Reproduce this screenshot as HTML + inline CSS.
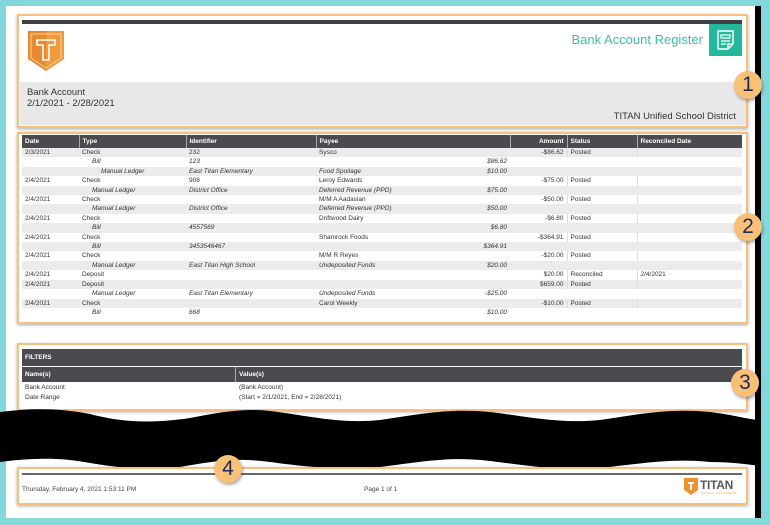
<!DOCTYPE html>
<html><head><meta charset="utf-8"><style>
*{margin:0;padding:0;box-sizing:border-box}
body{width:770px;height:525px;background:#84d8dc;position:relative;overflow:hidden;font-family:"Liberation Sans",Arial,sans-serif;color:#333}
.page{position:absolute;left:6px;top:6px;width:752px;height:512px;background:#fff}
.rb{position:absolute;left:755px;top:6px;width:6px;height:512px;background:#000}
.box{position:absolute;border:2px solid #f8c07a;box-shadow:0 1px 3px rgba(0,0,0,.35)}
.badge{position:absolute;width:28px;height:28px;border-radius:50%;background:#f9c176;color:#1f2a56;font-size:21px;text-align:center;line-height:28px;box-shadow:1px 2px 3px rgba(0,0,0,.35)}
table{border-collapse:collapse;position:absolute;font-size:6.5px}
th{background:#4a4b4f;color:#fff;text-align:left;font-weight:bold;padding:0 3px;height:13px;border-left:1px solid #aaa}
td{height:9.4px;padding:0 3px;white-space:nowrap;line-height:9.4px}
tr:nth-child(even) td{background:#ebebec}
.i{font-style:italic}
.r{text-align:right}
.sb{border-left:1px solid #ddd}
</style></head><body>
<div class="page"></div>
<div class="rb"></div>

<!-- box1 -->
<div class="box" style="left:17px;top:14px;width:731px;height:114px"></div>
<div style="position:absolute;left:22px;top:20px;width:720px;height:4px;background:#3e4044"></div>
<svg style="position:absolute;left:28px;top:31px" width="36" height="40" viewBox="0 0 36 40">
<path d="M0 0H36V28L18 40L0 28Z" fill="#e8892e"/><path d="M18 0H36V28L18 40Z" fill="#f19a3c"/>
<path d="M3 3H33V27L18 37L3 27Z" fill="none" stroke="#fbd0a0" stroke-width="1"/>
<path d="M9 9H27V14H21V29H15V14H9Z" fill="none" stroke="#fff" stroke-width="1.6"/></svg>
<div style="position:absolute;right:67px;top:32px;font-size:13px;color:#3dbfa6;white-space:nowrap">Bank Account Register</div>
<div style="position:absolute;left:709px;top:24px;width:33px;height:32px;background:#24b89e"></div>
<svg style="position:absolute;left:716px;top:30px" width="19" height="20" viewBox="0 0 19 20"><path d="M2 1H17V14L12 19H2Z M12 19V14H17" fill="none" stroke="#fff" stroke-width="1.4"/><path d="M5 5H14V8H5Z M5 11H14 M5 14H10" fill="none" stroke="#fff" stroke-width="1.2"/></svg>
<div style="position:absolute;left:20px;top:82px;width:726px;height:43px;background:#e8e8e9"></div>
<div style="position:absolute;left:27px;top:87px;font-size:9.5px;line-height:11px;color:#333">Bank Account<br>2/1/2021 - 2/28/2021</div>
<div style="position:absolute;right:34px;top:111px;font-size:9.5px;color:#333">TITAN Unified School District</div>
<div class="badge" style="left:734px;top:71px">1</div>

<!-- box2 -->
<div class="box" style="left:17px;top:132px;width:731px;height:192px"></div>
<table style="left:22px;top:135px;width:720px">
<tr><th style="width:57px;border-left:0">Date</th><th style="width:107px">Type</th><th style="width:130px">Identifier</th><th style="width:194px">Payee</th><th style="width:57px;text-align:right">Amount</th><th style="width:70px">Status</th><th>Reconciled Date</th></tr>
<tr><td>2/3/2021</td><td>Check</td><td>232</td><td>Sysco</td><td class="r">-$86.62</td><td class="sb">Posted</td><td class="sb"></td></tr>
<tr><td></td><td class="i" style="padding-left:13px">Bill</td><td class="i">123</td><td class="i r">$86.62</td><td></td><td></td><td></td></tr>
<tr><td></td><td class="i" style="padding-left:22px">Manual Ledger</td><td class="i">East Titan Elementary</td><td class="i" style="position:relative">Food Spoilage<span style="position:absolute;right:3px">$10.00</span></td><td></td><td></td><td></td></tr>
<tr><td>2/4/2021</td><td>Check</td><td>908</td><td>Leroy Edwards</td><td class="r">-$75.00</td><td class="sb">Posted</td><td class="sb"></td></tr>
<tr><td></td><td class="i" style="padding-left:13px">Manual Ledger</td><td class="i">District Office</td><td class="i" style="position:relative">Deferred Revenue (PPD)<span style="position:absolute;right:3px">$75.00</span></td><td></td><td></td><td></td></tr>
<tr><td>2/4/2021</td><td>Check</td><td></td><td>M/M A Aadasian</td><td class="r">-$50.00</td><td class="sb">Posted</td><td class="sb"></td></tr>
<tr><td></td><td class="i" style="padding-left:13px">Manual Ledger</td><td class="i">District Office</td><td class="i" style="position:relative">Deferred Revenue (PPD)<span style="position:absolute;right:3px">$50.00</span></td><td></td><td></td><td></td></tr>
<tr><td>2/4/2021</td><td>Check</td><td></td><td>Driftwood Dairy</td><td class="r">-$6.80</td><td class="sb">Posted</td><td class="sb"></td></tr>
<tr><td></td><td class="i" style="padding-left:13px">Bill</td><td class="i">4557569</td><td class="i r">$6.80</td><td></td><td></td><td></td></tr>
<tr><td>2/4/2021</td><td>Check</td><td></td><td>Shamrock Foods</td><td class="r">-$364.91</td><td class="sb">Posted</td><td class="sb"></td></tr>
<tr><td></td><td class="i" style="padding-left:13px">Bill</td><td class="i">3453546467</td><td class="i r">$364.91</td><td></td><td></td><td></td></tr>
<tr><td>2/4/2021</td><td>Check</td><td></td><td>M/M R Reyes</td><td class="r">-$20.00</td><td class="sb">Posted</td><td class="sb"></td></tr>
<tr><td></td><td class="i" style="padding-left:13px">Manual Ledger</td><td class="i">East Titan High School</td><td class="i" style="position:relative">Undeposited Funds<span style="position:absolute;right:3px">$20.00</span></td><td></td><td></td><td></td></tr>
<tr><td>2/4/2021</td><td>Deposit</td><td></td><td></td><td class="r">$20.00</td><td class="sb">Reconciled</td><td class="sb">2/4/2021</td></tr>
<tr><td>2/4/2021</td><td>Deposit</td><td></td><td></td><td class="r">$659.00</td><td class="sb">Posted</td><td class="sb"></td></tr>
<tr><td></td><td class="i" style="padding-left:13px">Manual Ledger</td><td class="i">East Titan Elementary</td><td class="i" style="position:relative">Undeposited Funds<span style="position:absolute;right:3px">-$25.00</span></td><td></td><td></td><td></td></tr>
<tr><td>2/4/2021</td><td>Check</td><td></td><td>Carol Weekly</td><td class="r">-$10.00</td><td class="sb">Posted</td><td class="sb"></td></tr>
<tr><td></td><td class="i" style="padding-left:13px">Bill</td><td class="i">668</td><td class="i r">$10.00</td><td></td><td></td><td></td></tr>
</table>
<div class="badge" style="left:734px;top:213px">2</div>

<!-- box3 -->
<div class="box" style="left:17px;top:343px;width:731px;height:68px"></div>
<div style="position:absolute;left:22px;top:349px;width:720px;height:17px;background:#4a4b4f;color:#fff;font-size:6.5px;font-weight:bold;padding:5px 3px">FILTERS</div>
<div style="position:absolute;left:22px;top:367px;width:720px;height:15px;background:#4a4b4f;color:#fff;font-size:6.5px;font-weight:bold"><span style="position:absolute;left:3px;top:4px">Name(s)</span><span style="position:absolute;left:213px;top:0;height:15px;border-left:1px solid #aaa;padding:4px 3px">Value(s)</span></div>
<div style="position:absolute;left:25px;top:383px;font-size:6.5px;line-height:10px">Bank Account<br>Date Range</div>
<div style="position:absolute;left:239px;top:383px;font-size:6.5px;line-height:10px">(Bank Account)<br>(Start = 2/1/2021, End = 2/28/2021)</div>
<div class="badge" style="left:731px;top:369px">3</div>

<!-- wave -->
<svg style="position:absolute;left:0;top:400px" width="760" height="75" viewBox="0 0 760 75">
<path d="M0 12 C30 8,60 8,90 14 C120 22,150 24,190 18 C220 12,245 8,270 11 C310 16,340 24,380 20 C420 14,450 8,490 12 C530 17,560 24,600 20 C640 14,670 8,710 12 C735 15,750 20,760 20 V66 C745 64,730 62,710 62 C670 58,640 64,600 68 C560 71,530 66,490 61 C450 56,420 62,380 67 C340 71,300 66,270 62 C235 57,210 62,180 67 C150 71,120 68,90 63 C60 57,30 58,0 62 Z" fill="#000"/></svg>

<!-- box4 -->
<div class="box" style="left:17px;top:467px;width:731px;height:38px"></div>
<div style="position:absolute;left:22px;top:473px;width:720px;height:2px;background:#666a70"></div>
<div style="position:absolute;left:22px;top:486px;font-size:6.5px;color:#444">Thursday, February 4, 2021 1:53:11 PM</div>
<div style="position:absolute;left:364px;top:486px;font-size:6.5px;color:#444">Page 1 of 1</div>
<svg style="position:absolute;left:684px;top:478px" width="14" height="17" viewBox="0 0 14 17"><path d="M0 0H14V12L7 17L0 12Z" fill="#f0932f"/><path d="M4 4H10V6H8V12H6V6H4Z" fill="#fff"/></svg>
<div style="position:absolute;left:700px;top:478px;font-size:12px;font-weight:bold;color:#555a60;letter-spacing:-0.3px">TITAN</div>
<div style="position:absolute;left:701px;top:492px;font-size:2.5px;color:#f0932f;letter-spacing:0.6px">SCHOOL SOLUTIONS</div>
<div class="badge" style="left:214px;top:455px">4</div>
</body></html>
